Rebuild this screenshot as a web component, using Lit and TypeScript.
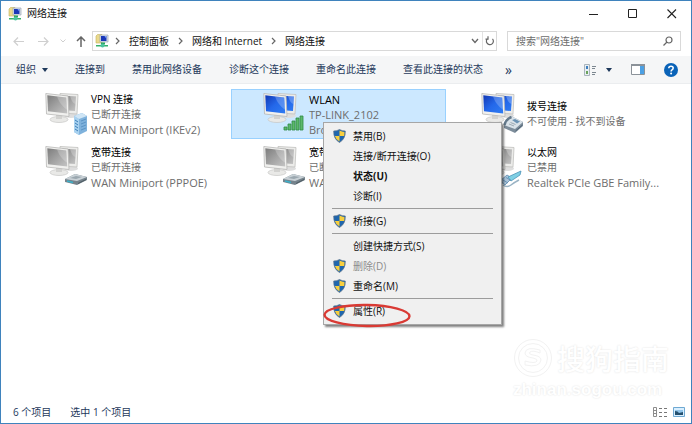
import { LitElement, html, css, svg, nothing } from "lit";
import { customElement, property } from "lit/decorators.js";

type Accessory = "server" | "modem" | "signal" | "phone" | "cable";

interface Connection {
  name: string;
  status: string;
  device?: string;
  lit: boolean;
  accessory: Accessory;
  selected?: boolean;
}

const CONNECTIONS: Connection[] = [
  { name: "VPN 连接", status: "已断开连接", device: "WAN Miniport (IKEv2)", lit: false, accessory: "server" },
  { name: "WLAN", status: "TP-LINK_2102", device: "Broadcom 802.11n", lit: true, accessory: "signal", selected: true },
  { name: "拨号连接", status: "不可使用 - 找不到设备", lit: true, accessory: "phone" },
  { name: "宽带连接", status: "已断开连接", device: "WAN Miniport (PPPOE)", lit: false, accessory: "modem" },
  { name: "宽带连接", status: "已断开连接", device: "WAN Miniport", lit: false, accessory: "modem" },
  { name: "以太网", status: "已禁用", device: "Realtek PCIe GBE Family...", lit: false, accessory: "cable" },
];

interface MenuEntry {
  label: string;
  shield?: boolean;
  bold?: boolean;
  disabled?: boolean;
  marked?: boolean;
}

const MENU: MenuEntry[][] = [
  [
    { label: "禁用(B)", shield: true },
    { label: "连接/断开连接(O)" },
    { label: "状态(U)", bold: true },
    { label: "诊断(I)" },
  ],
  [{ label: "桥接(G)", shield: true }],
  [
    { label: "创建快捷方式(S)" },
    { label: "删除(D)", shield: true, disabled: true },
    { label: "重命名(M)", shield: true },
  ],
  [{ label: "属性(R)", shield: true, marked: true }],
];

const COMMANDS = ["连接到", "禁用此网络设备", "诊断这个连接", "重命名此连接", "查看此连接的状态"];

const accessories = {
  server: svg`
    <path d="M29 25 L37 22 L42 25 L42 40 L34 44 L29 41Z" fill="#7fb2dc"/>
    <path d="M29 25 L34 28 L34 44 L29 41Z" fill="#a9d2f0"/>
    <path d="M29 25 L37 22 L42 25 L34 28Z" fill="#cfe5f5"/>
    <path d="M30 29 l3 2 M30 32 l3 2 M30 35 l3 2 M30 38 l3 2" stroke="#3d7fb8" stroke-width="1"/>
    <path d="M36 30 l5 -2 M36 33 l5 -2 M36 36 l5 -2 M36 39 l5 -2" stroke="#5b93c5" stroke-width="1"/>`,
  modem: svg`
    <path d="M20 35 L30 30 L42 33 L42 36 L32 41 L20 38Z" fill="#75838c"/>
    <path d="M20 35 L30 30 L42 33 L32 37Z" fill="#c9d1d6"/>
    <path d="M25 34 L31 32 L37 33 L31 35Z" fill="#9aa7af"/>
    <path d="M22 37 l6 1.500" stroke="#3bb0c8" stroke-width="1.600"/>
    <path d="M33 39.500 l8 -4" stroke="#4c5961" stroke-width="1"/>`,
  signal: svg`
    <path d="M22 35 h3 v3 h-3z M26 32 h3 v6 h-3z M30 29 h3 v9 h-3z M34 26 h3 v12 h-3z M38 24 h3 v14 h-3z"
      fill="#5cb86c" stroke="#2e8a45" stroke-width=".8" transform="translate(-1 1)"/>`,
  phone: svg`
    <path d="M23 34 L30 25 L42 31 L42 35 L34 42 L23 37Z" fill="#7d8d9b"/>
    <path d="M23 34 L30 25 L42 31 L34 38Z" fill="#d9e2e9"/>
    <path d="M23.500 34 Q25 28 30.500 26" fill="none" stroke="#64798b" stroke-width="2.500"/>
    <path d="M31 29 l3 -1 l5 2.500 l-3 2z" fill="#6b93b4"/>
    <path d="M28 33 l5 2 M29.500 31.500 l5 2" stroke="#8d9aa5" stroke-width=".8"/>
    <path d="M34.500 40 l7 -6" stroke="#4d6172" stroke-width="1"/>`,
  cable: svg`
    <path d="M19 37 L26 31 L31 34 L24 41Z" fill="#a9c4da" stroke="#5d8ab0" stroke-width=".8"/>
    <path d="M27 33 L40 27 L39 31 L30 37Z" fill="#7fd0e4" stroke="#4b93b8" stroke-width=".8"/>
    <path d="M22 36 l5 3 M25 33.500 l5 3" stroke="#5d8ab0" stroke-width=".8"/>
    <path d="M22 41 q4 3 8 0 q4 -3 8 -5" fill="none" stroke="#9ab3c4" stroke-width="1.500"/>`,
};

const gradients = svg`
  <defs>
    <linearGradient id="blue" x1="0" y1="0" x2="1" y2="1">
      <stop offset="0" stop-color="#1238b4"/><stop offset=".5" stop-color="#2468ea"/><stop offset="1" stop-color="#2f7cf2"/>
    </linearGradient>
    <linearGradient id="grey" x1="0" y1="0" x2="1" y2="1">
      <stop offset="0" stop-color="#7c7c7c"/><stop offset=".5" stop-color="#a2a2a2"/><stop offset="1" stop-color="#c4c4c4"/>
    </linearGradient>
  </defs>`;

@customElement("network-icon")
class NetworkIcon extends LitElement {
  @property({ type: Boolean }) lit = false;
  @property() accessory: Accessory = "server";

  static styles = css`
    :host { display: block; width: 42px; height: 46px; }
    svg { display: block; overflow: visible; }
  `;

  render() {
    const fill = this.lit ? "url(#blue)" : "url(#grey)";
    return html`<svg width="42" height="46" viewBox="0 0 42 46" aria-hidden="true">
      ${gradients}
      <ellipse cx="26" cy="24.500" rx="7" ry="2.500" fill="#dedede"/>
      <path d="M15 2.500 L33 3.500 L32 23 L15 22Z" fill="#ececea" stroke="#c0c0be" stroke-width=".8"/>
      <path d="M17 4.500 L31 5.500 L30 20 L17 19Z" fill=${fill}/>
      <path d="M25 5 L31 5.500 L30.500 13 Q27 12 25 5Z" fill="#fff" opacity=".25"/>
      <ellipse cx="14" cy="28.500" rx="9" ry="3" fill="#e9e9e7" stroke="#c6c6c4" stroke-width=".7"/>
      <path d="M11 23 h6 v5 h-6z" fill="#d2d2d0"/>
      <path d="M.8 2.500 L23 5 L24 25.500 L1.500 23Z" fill="#f0f0ee" stroke="#b8b8b6" stroke-width=".8"/>
      <path d="M2.300 4.300 L21.300 6.500 L22.200 22.500 L3 20.300Z" fill=${fill}/>
      <path d="M12 5.500 L21.300 6.500 L22.200 19 Q15 14 12 5.500Z" fill="#fff" opacity=".22"/>
      ${accessories[this.accessory]}
    </svg>`;
  }
}

const folderIcon = html`<svg class="glyph" width="14" height="14" viewBox="0 0 14 14" aria-hidden="true">
  <path d="M1 2 L2.500 .5 H7 V9 H1Z" fill="#ead98c" stroke="#c2b25c" stroke-width=".6"/>
  <path d="M5 1 h8 v7 h-8z" fill="#dfe3ea" stroke="#9aa5b5" stroke-width=".7"/>
  <path d="M6 2 h5.500 v5 h-5.500z" fill="#1a37b8"/>
  <path d="M9.500 2 h2 v2 q-1.500 0 -2 -2z" fill="#7ea2f4"/>
  <path d="M6 8.500 h4 v2 h-4z" fill="#2aa35a"/>
  <path d="M1 11 h12 v1.500 h-12z" fill="#36b06a"/>
  <circle cx="7.500" cy="11.500" r="2" fill="#4cc4a0"/>
</svg>`;

const shieldIcon = html`<svg class="shield" width="13" height="14" viewBox="0 0 13 14" aria-hidden="true">
  <path d="M6.500 .5 Q9 2 12.300 2 Q12.600 10 6.500 13.500 Q.4 10 .7 2 Q4 2 6.500 .5Z" fill="#1f66ad"/>
  <path d="M6.500 1.500 Q9 2.800 11.500 2.900 Q11.700 5 11.300 7 H6.500Z" fill="#f8cf3e"/>
  <path d="M6.500 7 V12.500 Q2.800 10.500 1.800 7Z" fill="#f8cf3e"/>
  <path d="M6.500 .5 Q9 2 12.300 2 Q12.600 10 6.500 13.500 Q.4 10 .7 2 Q4 2 6.500 .5Z" fill="none" stroke="#57708a" stroke-width=".7"/>
</svg>`;

@customElement("context-menu")
class ContextMenu extends LitElement {
  static styles = css`
    :host {
      display: block;
      box-sizing: border-box;
      width: 179px;
      padding: 3px 2px;
      background: #f0f0f0;
      border: 1px solid #a6a6a6;
      box-shadow: 2px 2px 2px rgba(0, 0, 0, 0.5);
    }
    .entry {
      position: relative;
      display: grid;
      grid-template-columns: 13px 1fr;
      column-gap: 7px;
      align-items: center;
      width: 100%;
      height: 20px;
      padding: 0 7px;
      border: 0;
      background: none;
      color: #111;
      font: 10px/20px "Open Sans", "Noto Sans CJK SC", sans-serif;
      text-align: left;
      white-space: nowrap;
    }
    .label { grid-column: 2; }
    .bold { font-weight: 700; }
    .entry:disabled { color: #8c8c8c; }
    .shield { grid-row: 1; display: block; }
    .rule {
      height: 1px;
      margin: 2px 6px;
      border: 0;
      background: #9c9c9c;
    }
    .ring {
      position: absolute;
      left: -4px;
      top: 1px;
      pointer-events: none;
    }
  `;

  render() {
    return MENU.map(
      (group, i) => html`
        ${i ? html`<hr class="rule" />` : nothing}
        ${group.map(
          (e) => html`<button class="entry ${e.bold ? "bold" : ""}" role="menuitem" ?disabled=${e.disabled}>
            ${e.shield ? shieldIcon : nothing}<span class="label">${e.label}</span>
            ${e.marked
              ? html`<svg class="ring" width="90" height="27" viewBox="0 0 90 27" aria-hidden="true">
                  <ellipse cx="45" cy="13.500" rx="42.500" ry="10.500" fill="none" stroke="#d93a34" stroke-width="2.400" transform="rotate(1 45 13.500)"/>
                </svg>`
              : nothing}
          </button>`
        )}
      `
    );
  }
}

@customElement("app-root")
class AppRoot extends LitElement {
  static styles = css`
    :host {
      display: block;
      font: 10px/15px "Open Sans", "Noto Sans CJK SC", sans-serif;
      color: #111;
    }
    button, input, a { font: inherit; color: inherit; }
    button { padding: 0; border: 0; background: none; white-space: nowrap; }
    a { text-decoration: none; }
    svg { display: block; }
    .window {
      position: relative;
      box-sizing: border-box;
      display: flex;
      flex-direction: column;
      min-height: 100vh;
      border: 1px solid #3f83bd;
      background: #fff;
    }
    .titlebar {
      display: flex;
      align-items: center;
      gap: 5px;
      height: 25px;
      padding-left: 7px;
    }
    .title { flex: 1; margin: 0; font: inherit; }
    .captions { display: flex; }
    .caption { display: grid; place-items: center; width: 39px; height: 24px; }
    .nav {
      display: flex;
      align-items: center;
      height: 30px;
      padding: 0 10px 0 11px;
    }
    .arrow { display: grid; place-items: center; width: 12px; height: 20px; margin-right: 13px; }
    .recent { width: 8px; margin: 0 8px 0 -3px; }
    .up { margin-right: 5px; }
    .address, .search {
      box-sizing: border-box;
      display: flex;
      align-items: center;
      height: 20px;
      border: 1px solid #d9d9d9;
    }
    .address { flex: 1; padding-left: 2px; margin-right: 10px; }
    .crumbs { flex: 1; display: flex; align-items: center; gap: 9px; white-space: nowrap; }
    .crumbs .glyph { margin-right: -3px; }
    .drop { display: grid; place-items: center; width: 14px; height: 18px; }
    .reload { border-left: 1px solid #e2e2e2; }
    .search { flex: 0 0 174px; padding: 0 7px 0 8px; color: #6d6d6d; }
    .query { flex: 1; min-width: 0; padding: 0; border: 0; outline: 0; background: none; }
    .query::placeholder { color: #6d6d6d; opacity: 1; }
    .toolbar {
      display: flex;
      align-items: center;
      gap: 27px;
      height: 27px;
      padding: 0 13px 0 15px;
      background: #f5f6f7;
      border-bottom: 1px solid #ebedef;
      color: #1e395b;
    }
    .organize { display: flex; align-items: center; gap: 6px; }
    .more { font-size: 14px; margin-left: -5px; }
    .tools { display: flex; align-items: center; gap: 19px; margin-left: auto; }
    .views { display: flex; align-items: center; gap: 9px; }
    .grid {
      flex: 1;
      display: grid;
      grid-template-columns: repeat(auto-fill, 215px);
      grid-auto-rows: 50px;
      align-content: start;
      gap: 3px;
      margin: 0;
      padding: 5px 0 0 12px;
      list-style: none;
    }
    .cell { position: relative; }
    .item {
      display: flex;
      align-items: center;
      gap: 4px;
      box-sizing: border-box;
      width: 100%;
      height: 100%;
      padding-left: 31px;
      border: 1px solid transparent;
      text-align: left;
    }
    .selected { background: #cce8ff; border-color: #99d1ff; }
    .text { display: flex; flex-direction: column; color: #6d6d6d; }
    .name { color: #000; }
    .latin { font-size: 11px; }
    .popup { position: absolute; z-index: 2; left: 92px; top: 33px; }
    .status {
      display: flex;
      align-items: center;
      gap: 19px;
      height: 21px;
      padding: 0 6px 0 12px;
      color: #1e395b;
    }
    .modes { display: flex; gap: 6px; margin-left: auto; }
    .watermark {
      position: absolute;
      right: 22px;
      bottom: 21px;
      display: grid;
      grid-template-columns: auto auto;
      column-gap: 4px;
      align-items: center;
      color: #fff;
      text-shadow: 0 0 2px #dedede;
      pointer-events: none;
    }
    .brand { font: 500 28px/40px "Noto Sans CJK SC", sans-serif; }
    .site { grid-column: 1 / 3; font: 700 17px/24px "Liberation Sans", sans-serif; }
  `;

  private crumb(label: string) {
    return html`<svg width="5" height="8" viewBox="0 0 5 8" aria-hidden="true"><path d="M1 1 L4 4 L1 7" fill="none" stroke="#666" stroke-width="1.200"/></svg>
      <a href="#">${label}</a>`;
  }

  private line(text: string, cls = "") {
    const latin = !/[\u4e00-\u9fff]/.test(text);
    return html`<span class="${cls} ${latin ? "latin" : ""}">${text}</span>`;
  }

  render() {
    return html`<main class="window">
      <header class="titlebar">
        ${folderIcon}
        <h1 class="title">网络连接</h1>
        <div class="captions">
          <button class="caption" aria-label="最小化"><svg width="10" height="10"><path d="M0 5.500 H9" stroke="#222"/></svg></button>
          <button class="caption" aria-label="最大化"><svg width="10" height="10"><path d="M.5 .5 h8 v8 h-8z" fill="none" stroke="#222"/></svg></button>
          <button class="caption" aria-label="关闭"><svg width="10" height="10"><path d="M.5 .5 L9 9 M9 .5 L.5 9" stroke="#222" stroke-width="1.100"/></svg></button>
        </div>
      </header>

      <nav class="nav">
        <button class="arrow" aria-label="后退"><svg width="11" height="9"><path d="M11 4.500 H1 M5 .5 L1 4.500 L5 8.500" fill="none" stroke="#cfcfcf" stroke-width="1.200"/></svg></button>
        <button class="arrow" aria-label="前进"><svg width="11" height="9"><path d="M0 4.500 H10 M6 .5 L10 4.500 L6 8.500" fill="none" stroke="#cfcfcf" stroke-width="1.200"/></svg></button>
        <button class="arrow recent" aria-label="最近"><svg width="6" height="4"><path d="M.5 .5 L3 3 L5.500 .5" fill="none" stroke="#cfcfcf"/></svg></button>
        <button class="arrow up" aria-label="向上"><svg width="10" height="11"><path d="M5 11 V1 M1 5 L5 1 L9 5" fill="none" stroke="#666" stroke-width="1.500"/></svg></button>
        <div class="address">
          <div class="crumbs">${folderIcon}${["控制面板", "网络和 Internet", "网络连接"].map((c) => this.crumb(c))}</div>
          <button class="drop" aria-label="展开"><svg width="8" height="6"><path d="M1 1 L4 4.500 L7 1" fill="none" stroke="#666" stroke-width="1.300"/></svg></button>
          <button class="drop reload" aria-label="刷新"><svg width="10" height="10" viewBox="0 0 10 10"><path d="M3 2.200 A3.500 3.500 0 1 0 7.500 2.800 M3 .3 V3.200 H.5" fill="none" stroke="#666" stroke-width="1.200"/></svg></button>
        </div>
        <div class="search">
          <input class="query" type="text" aria-label="搜索" placeholder=${'搜索"网络连接"'} />
          <svg width="10" height="10"><circle cx="6" cy="4" r="3" fill="none" stroke="#666" stroke-width="1.200"/><path d="M4 6 L.5 9.500" stroke="#666" stroke-width="1.300"/></svg>
        </div>
      </nav>

      <div class="toolbar" role="toolbar">
        <button class="organize">组织 <svg width="6" height="4"><path d="M0 0 H6 L3 4Z" fill="#1e395b"/></svg></button>
        ${COMMANDS.map((c) => html`<button>${c}</button>`)}
        <button class="more" aria-label="更多">»</button>
        <div class="tools">
          <button class="views" aria-label="视图">
            <svg width="13" height="12"><path d="M.5 .5 h5 v11 h-5z" fill="#e8eef2" stroke="#a9b4bc"/><path d="M2 2 h2 v3 h-2z" fill="#3e7fc0"/><path d="M2 7 h2 v3 h-2z" fill="#6aa35c"/><path d="M8 2.500 h4 M8 4.500 h3 M8 8.500 h4 M8 10.500 h3" stroke="#7c8790"/></svg>
            <svg width="6" height="4"><path d="M0 0 H6 L3 4Z" fill="#1e395b"/></svg>
          </button>
          <button aria-label="预览窗格"><svg width="14" height="11"><path d="M.5 .5 h13 v10 h-13z" fill="#fff" stroke="#8b9299"/><path d="M0 0 h14 v2 h-14z" fill="#8b9299"/><path d="M9 2 h4 v8 h-4z" fill="#4ba0e4"/></svg></button>
          <button aria-label="帮助"><svg width="14" height="14" viewBox="0 0 14 14"><circle cx="7" cy="7" r="7" fill="#0a63b8"/><path d="M4.800 5.300 Q4.800 3.300 7 3.300 Q9.200 3.300 9.200 5.100 Q9.200 6.200 8 6.900 Q7.100 7.400 7.100 8.500" fill="none" stroke="#fff" stroke-width="1.500"/><circle cx="7.100" cy="10.500" r="1" fill="#fff"/></svg></button>
        </div>
      </div>

      <ul class="grid">
        ${CONNECTIONS.map(
          (c) => html`<li class="cell">
            <button class="item ${c.selected ? "selected" : ""}">
              <network-icon ?lit=${c.lit} .accessory=${c.accessory}></network-icon>
              <span class="text">${this.line(c.name, "name")}${this.line(c.status)}${c.device ? this.line(c.device) : nothing}</span>
            </button>
            ${c.selected ? html`<context-menu class="popup" role="menu"></context-menu>` : nothing}
          </li>`
        )}
      </ul>

      <div class="watermark">
        <svg width="40" height="40" viewBox="0 0 40 40" aria-hidden="true">
          <g fill="none" stroke="#f2f2f2" stroke-width="1">
            <circle cx="20" cy="20" r="18.500"/><circle cx="20" cy="20" r="14.500"/>
            <path d="M27 12 Q13 8 12 15 Q12 19 20 20 Q25 21 24 23 Q22 26 12 23 V27 Q27 30 28 22 Q28 18 20 17 Q15 16 17 14 Q20 12 27 15Z"/>
          </g>
        </svg>
        <span class="brand">搜狗指南</span>
        <span class="site">zhinan.sogou.com</span>
      </div>

      <footer class="status">
        <span>6 个项目</span><span>选中 1 个项目</span>
        <div class="modes">
          <button aria-label="详细信息"><svg width="14" height="11"><path d="M.5 .5 h3 v9 h-3z M0 3.500 h4 M0 6.500 h4" fill="none" stroke="#8c8c8c"/><path d="M6 1.500 h3 M11 1.500 h3 M6 5.500 h3 M11 5.500 h3 M6 9.500 h3 M11 9.500 h3" stroke="#777"/></svg></button>
          <button aria-label="大图标"><svg width="12" height="11"><path d="M.5 .5 h11 v9 h-11z" fill="#d9efff" stroke="#6fa9d2"/><path d="M2 3 h8 v5 h-8z" fill="#8fc4ea"/><path d="M2 4 Q5 4 6 6 L10 5 V8 H2Z" fill="#24506f"/></svg></button>
        </div>
      </footer>
    </main>`;
  }
}
